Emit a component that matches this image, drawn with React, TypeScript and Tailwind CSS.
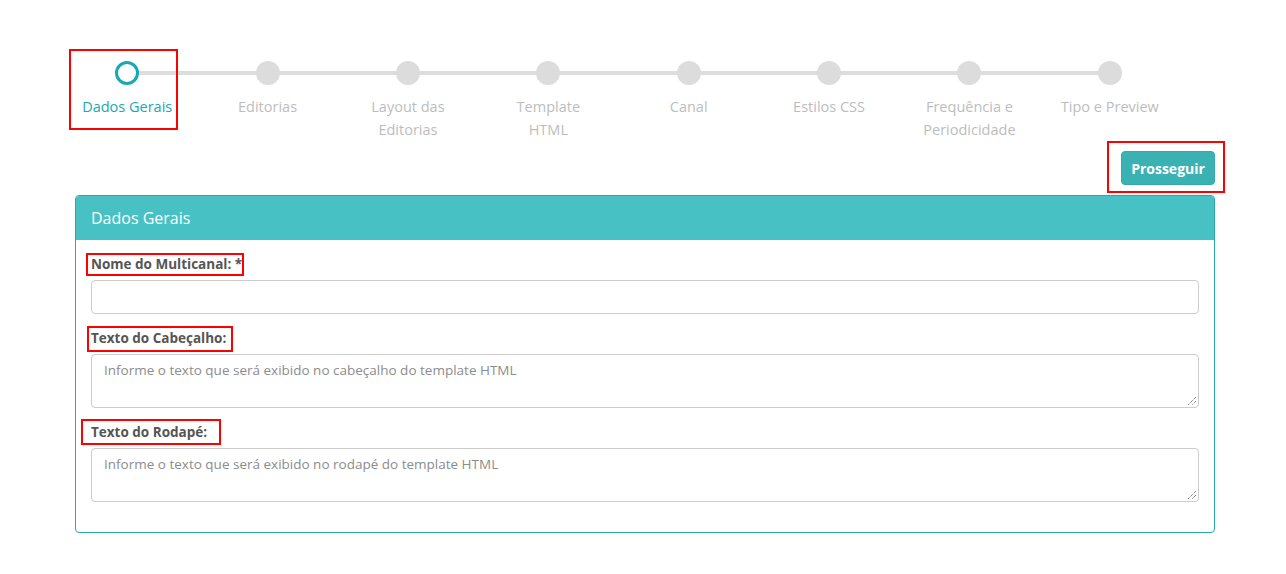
import React from "react";

const steps = [
  ["Dados Gerais"],
  ["Editorias"],
  ["Layout das", "Editorias"],
  ["Template", "HTML"],
  ["Canal"],
  ["Estilos CSS"],
  ["Frequência e", "Periodicidade"],
  ["Tipo e Preview"],
];

function Field({
  label,
  box,
  children,
}: {
  label: string;
  box: string;
  children: React.ReactNode;
}) {
  return (
    <div className="flex flex-col gap-[6px]">
      <div className="relative h-[20px] text-[13.5px] leading-[20px] font-bold text-[#555555]">
        {label}
        <span className={`absolute border-2 border-[#ff0000] ${box}`} />
      </div>
      {children}
    </div>
  );
}

function Area({ text }: { text: string }) {
  return (
    <div className="relative h-[54px] border border-[#cccccc] rounded-[4px] pl-[12px] pt-[5px] text-[13.5px] text-[#8c8c8c]">
      {text}
      <svg className="absolute right-[2px] bottom-[2px]" width="9" height="9" viewBox="0 0 9 9">
        <line x1="9" y1="1" x2="1" y2="9" stroke="#555" strokeWidth="1" strokeDasharray="1 1" />
        <line x1="9" y1="5" x2="5" y2="9" stroke="#555" strokeWidth="1" strokeDasharray="1 1" />
      </svg>
    </div>
  );
}

export default function App() {
  return (
    <div
      className="w-[1286px] h-[574px] bg-white overflow-hidden"
      style={{ fontFamily: '"Open Sans", "DejaVu Sans", sans-serif' }}
    >
      <div className="pt-[61px] pl-[57px] flex w-[1180px]">
        {steps.map((lines, i) => (
          <div key={i} className="relative flex-1 flex flex-col items-center gap-[10px]">
            {i < steps.length - 1 && (
              <div className="absolute left-1/2 top-[10px] w-full h-[4px] bg-[#dddddd]" />
            )}
            {i === 0 ? (
              <div className="relative z-10 w-[24px] h-[24px] rounded-full border-[3px] border-[#18a9b1] bg-white" />
            ) : (
              <div className="relative z-10 w-[24px] h-[24px] rounded-full bg-[#dcdcdc]" />
            )}
            <div
              className={`text-center text-[14.5px] leading-[23px] font-medium ${
                i === 0 ? "text-[#18a9b1]" : "text-[#bdbdbd]"
              }`}
            >
              {lines.map((l, j) => (
                <div key={j}>{l}</div>
              ))}
            </div>
            {i === 0 && (
              <div className="absolute left-[12px] top-[-12px] w-[109px] h-[81px] border-2 border-[#ff0000]" />
            )}
          </div>
        ))}
      </div>

      <div className="flex justify-end pr-[61px]">
        <div className="border-2 border-[#ff0000] pl-[12px] pr-[8px] pt-[8px] pb-[6px]">
          <button className="w-[94px] h-[34px] rounded-[4px] bg-[#3ab2b4] border border-[#35a9ab] text-white font-bold text-[14px]">
            Prosseguir
          </button>
        </div>
      </div>

      <div className="ml-[75px] mt-[2px] w-[1140px] h-[338px] border border-[#2aa8ab] rounded-[4px] overflow-hidden flex flex-col">
        <div className="h-[44px] bg-[#48c1c5] flex items-center pl-[15px] text-white text-[16px] font-medium">
          Dados Gerais
        </div>
        <div className="px-[15px] pt-[14px] flex flex-col gap-[14px]">
          <Field label="Nome do Multicanal: *" box="left-[-5px] top-[-1px] w-[158px] h-[23px]">
            <div className="h-[34px] border border-[#cccccc] rounded-[4px]" />
          </Field>
          <Field label="Texto do Cabeçalho:" box="left-[-4px] top-[-2px] w-[146px] h-[26px]">
            <Area text="Informe o texto que será exibido no cabeçalho do template HTML" />
          </Field>
          <Field label="Texto do Rodapé:" box="left-[-10px] top-[-3px] w-[140px] h-[26px]">
            <Area text="Informe o texto que será exibido no rodapé do template HTML" />
          </Field>
        </div>
      </div>
    </div>
  );
}
